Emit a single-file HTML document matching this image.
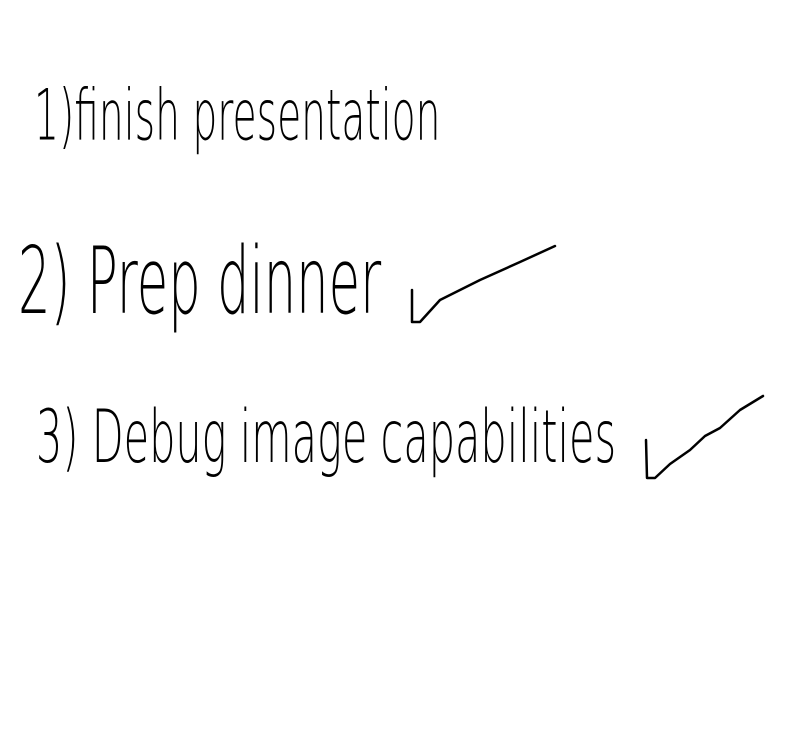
<!DOCTYPE html>
<html><head><style>
html,body{margin:0;padding:0;background:#fff;width:808px;height:744px;overflow:hidden}
.t{position:absolute;font-family:"DejaVu Sans","Liberation Sans",sans-serif;font-weight:200;color:#000;white-space:nowrap;transform-origin:0 0;line-height:1}
</style></head><body>
<div class="t" style="left:34px;top:82px;font-size:56px;transform:scale(0.70,1.25)">1)finish presentation</div>
<div class="t" style="left:18px;top:236px;font-size:64px;transform:scale(0.80,1.45)">2) Prep dinner</div>
<div class="t" style="left:36px;top:402px;font-size:56px;transform:scale(0.74,1.3)">3) Debug image capabilities</div>
<svg width="808" height="744" style="position:absolute;left:0;top:0" fill="none" stroke="#000" stroke-width="2.5" stroke-linecap="round" stroke-linejoin="round">
<path d="M412 290 L412 322 L420 322 L440 300 L480 280 L520 262 L555 246"/>
<path d="M646 440 L647 478 L655 478 L670 464 L690 450 L705 436 L720 428 L740 410 L763 396"/>
</svg>
</body></html>
